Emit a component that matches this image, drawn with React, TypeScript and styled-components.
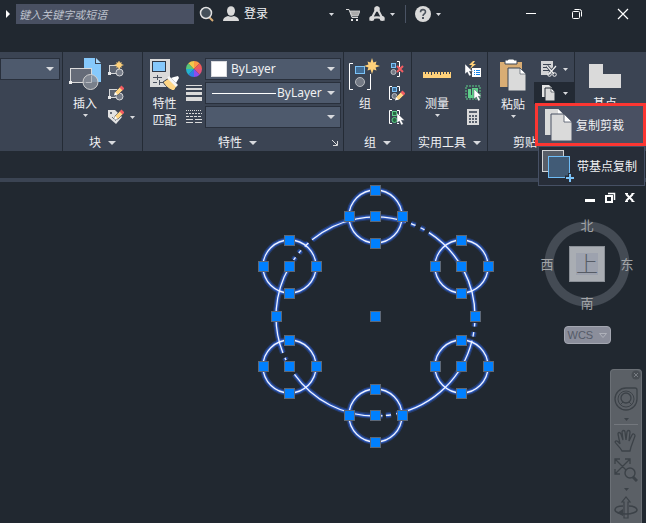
import React from "react";
import styled, { createGlobalStyle } from "styled-components";

const GlobalStyle = createGlobalStyle`
  *, *::before, *::after { box-sizing: border-box; }
  body {
    margin: 0;
    background: #212830;
    color: #f0f1f3;
    font-family: "Noto Sans", "Noto Sans CJK SC", sans-serif;
    font-size: 12px;
    line-height: 16px;
    overflow: hidden;
  }
  button, input, select {
    font: inherit;
    color: inherit;
    margin: 0;
    padding: 0;
    border: 0;
    background: none;
  }
  svg { display: block; flex: none; }
`;

const App = styled.div`
  display: flex;
  flex-direction: column;
  min-height: 100vh;
`;

/* ---------- title bar ---------- */

const TitleBar = styled.header`
  display: flex;
  align-items: center;
  height: 28px;
  margin-bottom: 24px;
  padding-left: 4px;
`;

const SearchBox = styled.input`
  width: 178px;
  height: 20px;
  margin-left: 4px;
  padding: 0 3px;
  background: #495062;
  font-size: 11px;
  font-style: italic;
  &::placeholder { color: #bcc1cc; opacity: 1; }
`;

const IconButton = styled.button<{ $gap?: number }>`
  display: flex;
  align-items: center;
  gap: 5px;
  margin-left: ${(p) => p.$gap ?? 0}px;
`;

const TitleGap = styled.div<{ $width: number }>`
  width: ${(p) => p.$width}px;
`;

const Divider = styled.div`
  width: 1px;
  height: 18px;
  margin: 0 9px 0 10px;
  background: #4a5364;
`;

const WindowButtons = styled.div`
  display: flex;
  gap: 34px;
  margin-left: auto;
  padding-right: 17px;
`;

/* ---------- ribbon ---------- */

const Ribbon = styled.nav`
  display: flex;
  height: 99px;
  background: #3b4453;
`;

const Panel = styled.section<{ $width?: number }>`
  display: flex;
  flex-direction: column;
  flex: ${(p) => (p.$width ? `0 0 ${p.$width}px` : "1")};
  min-width: 0;
  border-right: 1px solid #242b35;
  &:last-child { border-right: 0; }
`;

const PanelBody = styled.div<{ $left?: number; $gap?: number }>`
  display: flex;
  height: 82px;
  gap: ${(p) => p.$gap ?? 4}px;
  padding: 6px 2px 0 ${(p) => p.$left ?? 4}px;
`;

const PanelTitle = styled.div`
  display: flex;
  align-items: center;
  justify-content: center;
  gap: 7px;
  height: 17px;
  white-space: nowrap;
`;

const PanelFooter = styled.div`
  display: grid;
  grid-template-columns: 1fr auto;
  align-items: center;
  padding-right: 5px;
`;

const BigButton = styled.button<{ $width: number }>`
  display: flex;
  flex-direction: column;
  align-items: center;
  flex: 0 0 ${(p) => p.$width}px;
  height: 74px;
  & > svg:last-child:not(:first-child) { margin-top: 2px; }
`;

const BigLabel = styled.span`
  margin-top: 5px;
  line-height: 17px;
  white-space: pre-line;
`;

const Stack = styled.div`
  display: flex;
  flex-direction: column;
  gap: 8px;
  padding-top: 3px;
`;

const SmallButton = styled.button<{ $active?: boolean }>`
  display: flex;
  align-items: center;
  gap: 6px;
  height: 16px;
  ${(p) => p.$active && "background: #232a34; box-shadow: -4px 0 0 3px #232a34, 4px 0 0 3px #232a34;"}
`;

const Fields = styled.div`
  display: flex;
  flex-direction: column;
  flex: 1;
  gap: 2px;
`;

const Field = styled.label`
  display: flex;
  align-items: center;
  height: 22px;
  padding: 0 5px;
  gap: 4px;
  background: #4e5a6d;
  border: 1px solid #29303c;
`;

const Select = styled.select`
  flex: 1;
  width: 0;
  min-width: 0;
  appearance: none;
  outline: 0;
  overflow: hidden;
  text-overflow: clip;
`;

const Swatch = styled.span`
  width: 16px;
  height: 16px;
  background: #fff;
  border: 1px solid #d9dadd;
`;

const LinePreview = styled.span`
  width: 64px;
  height: 1px;
  background: #fff;
  margin: 0 -3px 0 1px;
`;

/* ---------- drop-down menu ---------- */

const Anchor = styled.div`
  position: relative;
  z-index: 2;
`;

const Menu = styled.div`
  position: absolute;
  top: -48px;
  right: 0;
  width: 111px;
`;

const MenuItem = styled.button<{ $marked?: boolean }>`
  display: flex;
  align-items: center;
  gap: 2px;
  width: ${(p) => (p.$marked ? "100%" : "107px")};
  height: ${(p) => (p.$marked ? 43 : 40)}px;
  margin-left: ${(p) => (p.$marked ? 0 : 3)}px;
  padding-left: ${(p) => (p.$marked ? 5 : 2)}px;
  background: ${(p) => (p.$marked ? "#495062" : "#272d38")};
  border: ${(p) => (p.$marked ? "3px solid #fc3632" : "1px solid #465064")};
  white-space: nowrap;
  & > span { padding-top: 2px; }
`;

/* ---------- drawing area ---------- */

const TabStrip = styled.div`
  height: 31px;
  border-bottom: 4px solid #3b4453;
  background: #232a33;
`;

const Canvas = styled.main`
  position: relative;
  flex: 1;
  overflow: hidden;
  padding-left: 250px;
`;

const ViewControls = styled.div`
  position: absolute;
  top: 10px;
  right: 10px;
  display: flex;
  gap: 8px;
`;

const ViewCube = styled.div`
  position: absolute;
  top: 34px;
  right: 11px;
  width: 96px;
  display: flex;
  flex-direction: column;
  align-items: center;
`;

const Compass = styled.div`
  display: grid;
  grid-template: 18px 60px 18px / 16px 64px 16px;
  place-items: center;
  width: 96px;
  height: 96px;
  background: radial-gradient(circle, transparent 33px, #444b54 34px, #444b54 42px, transparent 43px);
`;

const Direction = styled.button<{ $area: string }>`
  grid-area: ${(p) => p.$area};
  font-size: 13px;
  color: #a2a4a7;
`;

const Face = styled.button`
  grid-area: 2 / 2;
  display: grid;
  place-items: center;
  width: 36px;
  height: 36px;
  background: #a9adb3;
  border: 1px solid #8a8f96;
  & > span {
    width: 22px;
    height: 22px;
    background: #9da2ae;
    font-size: 22px;
    line-height: 20px;
    font-weight: 300;
    color: #565c66;
  }
`;

const WcsButton = styled.button`
  display: flex;
  align-items: center;
  gap: 6px;
  width: 47px;
  height: 18px;
  margin-top: 14px;
  padding-left: 3px;
  border: 1px solid #a4a7b1;
  border-radius: 4px;
  background: #8b8e9b;
  color: #555b68;
  font-family: "Liberation Sans", sans-serif;
  font-size: 11px;
`;

const NavBar = styled.div`
  position: absolute;
  top: 187px;
  right: 4px;
  bottom: 0;
  width: 32px;
  display: flex;
  flex-direction: column;
  align-items: center;
  background: #5b6066;
  border: 1px solid #6b7076;
  border-bottom: 0;
  border-radius: 4px 4px 0 0;
`;

const NavButton = styled.button<{ $top?: number; $end?: boolean }>`
  margin-top: ${(p) => p.$top ?? 0}px;
  align-self: ${(p) => (p.$end ? "flex-end" : "center")};
`;

const NavRule = styled.hr`
  width: 24px;
  margin: 3px 0 0;
  border: 0;
  border-top: 1px solid #73777d;
`;

/* ---------- icons ---------- */

type IconProps = { w?: number; h?: number; children: React.ReactNode };

const Icon = ({ w = 16, h = w, children }: IconProps) => (
  <svg width={w} height={h} viewBox={`0 0 ${w} ${h}`} fill="none" aria-hidden="true">
    {children}
  </svg>
);

const Caret = ({ small }: { small?: boolean }) =>
  small ? (
    <Icon w={5} h={3}><path d="M0 0h5L2.5 3z" fill="#d8dade" /></Icon>
  ) : (
    <Icon w={8} h={4}><path d="M0 0h8L4 4z" fill="#d8dade" /></Icon>
  );

const Star = ({ x, y, r }: { x: number; y: number; r: number }) => {
  const pts = Array.from({ length: 16 }, (_, i) => {
    const rad = i % 2 ? r * 0.48 : i % 4 ? r * 0.8 : r;
    const a = (i * Math.PI) / 8;
    return `${x + rad * Math.cos(a)},${y + rad * Math.sin(a)}`;
  });
  return <polygon points={pts.join(" ")} fill="#ffd17a" />;
};

const Pencil = ({ x, y }: { x: number; y: number }) => (
  <g transform={`translate(${x} ${y})`}>
    <path d="M0 9l1-3 5-5 3 3-5 5z" fill="#ffd685" stroke="#3b4453" strokeWidth=".6" />
    <path d="M0 9.500l1-3.500 2.500 2.500z" fill="#fff" />
    <path d="M5.500 1.500L7.500-.5l3 3-2 2z" fill="#f25d62" />
  </g>
);

const Cursor = ({ x, y }: { x: number; y: number }) => (
  <path transform={`translate(${x} ${y})`} d="M0 0v10l2.300-2 2 4 2-1-2-3.700H7.500z" fill="#fff" stroke="#3b4453" strokeWidth=".4" />
);

const BlockBase = () => (
  <>
    <rect x="1.500" y="4.500" width="10" height="8" fill="#5c6472" stroke="#d5d6d8" />
    <circle cx="11.500" cy="11.500" r="3.500" fill="#767c88" stroke="#d5d6d8" />
    <path d="M0 11h3v3H0z" fill="#e8e8e8" />
  </>
);

const InsertIcon = () => (
  <Icon w={32}>
    <path d="M15 0h11v6h6v18H15z" fill="#86c9fc" />
    <path d="M27 0l5 5h-5z" fill="#a9dafd" />
    <rect x="1.500" y="10.500" width="21" height="14" fill="#656b78" stroke="#dadada" />
    <path d="M0 23h3v3H0z" fill="#eee" />
    <circle cx="21.500" cy="24" r="7.500" fill="#858b95" fillOpacity=".85" stroke="#d0d0d0" />
    <path d="M17 24.500h5.500V18" stroke="#b9bcc2" />
  </Icon>
);

const MatchIcon = () => (
  <Icon w={32} h={32}>
    <path d="M1 1h20v28H1z" fill="#dadada" />
    <rect x="3.500" y="3.500" width="13" height="10" fill="#86c9fc" stroke="#303947" />
    <path d="M4 19.500h9M8.500 17v5M4 24.500h4M10 24.500h4M10.500 22v5" stroke="#4b5361" />
    <path d="M14 24l6-4 8 8-3 5c-4-1-8-4-11-9z" fill="#ffd685" stroke="#3b4453" />
    <path d="M18 20l2-2 9 9-2 2z" fill="#f5f5f5" />
    <path d="M22 20l3-1 4-1 1 2-3 5z" fill="#fff" />
  </Icon>
);

const ColorWheel = () => {
  const colors = ["#ff9a45", "#ef5b5b", "#e2557b", "#8a4df0", "#2f7fe6", "#23b3cf", "#57c77a", "#f2c94c"];
  const at = (i: number) => {
    const a = ((i * 45 - 90) * Math.PI) / 180;
    return `${8 + 8 * Math.cos(a)} ${8 + 8 * Math.sin(a)}`;
  };
  return (
    <Icon>
      {colors.map((c, i) => <path key={c} d={`M8 8L${at(i)}A8 8 0 0 1 ${at(i + 1)}z`} fill={c} />)}
    </Icon>
  );
};

const GroupIcon = () => (
  <Icon w={32}>
    <path d="M4 5.500H.5v26H4M18 31.500h3.500V16" stroke="#fff" />
    <rect x="6.500" y="8.500" width="9" height="7" fill="#416d96" stroke="#7cc3f8" />
    <circle cx="11" cy="24" r="4.500" fill="#747a85" stroke="#b8bbc0" />
    <Star x={23} y={8} r={8} />
  </Icon>
);

const GroupSmall = ({ left, green, children }: { left?: boolean; green?: boolean; children: React.ReactNode }) => (
  <Icon>
    <path d={left ? "M3 1.500H.5v13H3M8 1.500h2.500V6M8 14.500h2" : "M8 .5h2.500V6M8 15.500h2.500V11"} stroke="#fff" />
    <rect x={left ? 3.5 : 2.5} y="2.500" width="4" height="4" fill={green ? "#286843" : "#416d96"} stroke={green ? "#5fd08a" : "#7cc3f8"} />
    <circle cx={left ? 5.5 : 4.5} cy="11" r="2.500" fill={green ? "#286843" : "#747a85"} stroke={green ? "#5fd08a" : "#b8bbc0"} />
    {children}
  </Icon>
);

const RulerIcon = () => (
  <Icon w={28} h={32}>
    <path d="M0 14h28v6H0z" fill="#ffd17a" />
    <path d="M2.500 14v2M5.500 14v2M8.500 14v3M11.500 14v2M14.500 14v2M17.500 14v3M20.500 14v2M23.500 14v2M26.500 14v2" stroke="#3b4453" />
  </Icon>
);

const PasteIcon = () => (
  <Icon w={28} h={33}>
    <path d="M1 4h22v25H1z" fill="#d9ad74" />
    <path d="M6 6V2h3V1h6v1h3v4z" fill="#fff" stroke="#3b4453" />
    <path d="M9 10h12l6 6v17H9z" fill="#dadada" stroke="#3b4453" />
    <path d="M21 10v6h6z" fill="#fff" stroke="#3b4453" strokeWidth=".6" />
  </Icon>
);

const PagesIcon = ({ big }: { big?: boolean }) =>
  big ? (
    <Icon w={31} h={34}>
      <path d="M2 1h13l6 6v20H2z" fill="#dadada" />
      <path d="M15 1v6h6z" fill="#fff" />
      <path d="M8 6h14l7 7v20H8z" fill="#dadada" stroke="#495062" />
      <path d="M21 6v8h8z" fill="#fff" stroke="#495062" strokeWidth=".8" />
    </Icon>
  ) : (
    <Icon>
      <path d="M1 0h7l3 3v9H1z" fill="#e3e3e3" />
      <path d="M4 3h6l4 4v9H4z" fill="#dadada" stroke="#232a34" />
      <path d="M10 3v4h4z" fill="#fff" stroke="#232a34" strokeWidth=".6" />
    </Icon>
  );

const BaseCopyIcon = () => (
  <Icon w={34} h={34}>
    <rect x="1.500" y="1.500" width="21" height="21" fill="#585e68" stroke="#d2d3d5" />
    <rect x="7.500" y="7.500" width="21" height="21" fill="#415b76" stroke="#6ebcf6" />
    <path d="M29 24v9M24 28.500h9" stroke="#272d38" strokeWidth="4" />
    <path d="M29 25v8M25 29h8" stroke="#7cc3f8" strokeWidth="2" />
  </Icon>
);

/* ---------- drawing ---------- */

const CENTER = { x: 375.5, y: 316.5, r: 99.5 };
const ARCS = [
  [230.4, 287.8], [290.9, 293.7], [296.9, 299.5], [302.5, 362], [3.7, 5.8], [9, 11.6], [14, 78],
  [81, 84], [86, 87.5], [90, 144.5], [154, 155.5], [158.5, 210], [214.6, 216.5], [219.6, 221.6], [224.7, 227.6],
];
const CIRCLES = [[375.5, 216.5], [289.5, 266.5], [461.5, 266.5], [289.5, 366.5], [461.5, 366.5], [375.5, 415.5]];

const arcPath = ([from, to]: number[]) => {
  const at = (deg: number) => {
    const a = (deg * Math.PI) / 180;
    return `${CENTER.x + CENTER.r * Math.cos(a)} ${CENTER.y + CENTER.r * Math.sin(a)}`;
  };
  return `M${at(from)}A${CENTER.r} ${CENTER.r} 0 0 1 ${at(to)}`;
};

const Curves = () => (
  <>
    <path d={ARCS.map(arcPath).join("")} />
    {CIRCLES.map(([x, y]) => <circle key={`${x}-${y}`} cx={x} cy={y} r="26.500" />)}
  </>
);

const Drawing = () => {
  const grips = [CENTER, { x: 276.5, y: 316.5 }, { x: 475.5, y: 316.5 }].map(({ x, y }) => [x, y]);
  CIRCLES.forEach(([x, y]) => {
    grips.push([x, y], [x - 26, y], [x + 27, y], [x, y - 26], [x, y + 27]);
  });
  return (
    <svg width="250" height="270" viewBox="250 182 250 270" fill="none" role="img" aria-label="图形">
      <g stroke="#2a5fd6" strokeWidth="6" strokeOpacity=".35"><Curves /></g>
      <g stroke="#2f62dc" strokeWidth="3.500" strokeOpacity=".7"><Curves /></g>
      <g stroke="#eef3ff" strokeWidth="1.300"><Curves /></g>
      {grips.map(([x, y]) => (
        <rect key={`${x}-${y}`} x={x - 5} y={y - 5} width="10" height="10" fill="#0080ff" stroke="#5d6878" />
      ))}
    </svg>
  );
};

const LINE = "#3c4248";

export default function CadWindow() {
  return (
    <App>
      <GlobalStyle />
      <TitleBar>
        <IconButton aria-label="展开">
          <Icon w={8} h={12}><path d="M2 2l4 4-4 4z" fill="#fff" /></Icon>
        </IconButton>
        <SearchBox aria-label="搜索" placeholder="键入关键字或短语" />
        <IconButton $gap={5} aria-label="查找">
          <Icon>
            <path d="M10 11l4 4" stroke="#d9ad74" strokeWidth="2" />
            <circle cx="7" cy="7" r="5.500" fill="#45505a" stroke="#e2e2e2" strokeWidth="1.500" />
          </Icon>
        </IconButton>
        <IconButton $gap={8}>
          <Icon>
            <ellipse cx="8" cy="5" rx="4" ry="4.800" fill="#dadada" />
            <path d="M0 15c0-3 2-4 5-5 2 1 4 1 6 0 3 1 5 2 5 5z" fill="#dadada" />
          </Icon>
          <span>登录</span>
        </IconButton>
        <TitleGap $width={61} />
        <IconButton aria-label="登录选项"><Caret small /></IconButton>
        <IconButton $gap={12} aria-label="商店">
          <Icon w={14}>
            <path d="M0 2.500h3l3 8h6" stroke="#d8d8d8" />
            <path d="M4 4h10l-2 5H6z" fill="#aaa" stroke="#d8d8d8" strokeWidth=".8" />
            <path d="M5 12h2v2H5zM10 12h2v2h-2z" fill="#e8e8e8" />
          </Icon>
        </IconButton>
        <IconButton $gap={9} aria-label="Autodesk App">
          <Icon>
            <path d="M8 2L2.500 12.500C6 11 10 11 13.500 12.500z" stroke="#dadada" strokeWidth="2.200" />
            <circle cx="8" cy="3" r="2.800" fill="#dadada" />
            <circle cx="2.800" cy="12.500" r="2.500" fill="#dadada" />
            <circle cx="13.200" cy="12.500" r="2.500" fill="#dadada" />
          </Icon>
          <Caret small />
        </IconButton>
        <Divider />
        <IconButton aria-label="帮助">
          <Icon>
            <circle cx="8" cy="8" r="8" fill="#dadada" />
            <path d="M5.500 6.200C5.500 2.700 10.500 2.800 10.500 6 10.500 8 8 7.800 8 10" stroke="#4c535d" strokeWidth="1.600" />
            <path d="M7 11h2v2H7z" fill="#4c535d" />
          </Icon>
          <Caret small />
        </IconButton>
        <WindowButtons>
          <IconButton aria-label="最小化"><Icon w={12}><path d="M1 5.500h10" stroke="#fff" /></Icon></IconButton>
          <IconButton aria-label="还原">
            <Icon w={12}>
              <rect x="1.500" y="3.500" width="7" height="7" rx="1" stroke="#fff" />
              <path d="M3.500 1.500h5a2 2 0 0 1 2 2v5" stroke="#fff" />
            </Icon>
          </IconButton>
          <IconButton aria-label="关闭"><Icon w={12}><path d="M1 1l10 10M11 1L1 11" stroke="#fff" strokeWidth="1.200" /></Icon></IconButton>
        </WindowButtons>
      </TitleBar>

      <Ribbon>
        <Panel $width={63}>
          <PanelBody $left={0}>
            <Fields>
              <Field>
                <Select aria-label="样式" />
                <Caret />
              </Field>
            </Fields>
          </PanelBody>
        </Panel>

        <Panel $width={80}>
          <PanelBody $left={4} $gap={5}>
            <BigButton $width={36}>
              <InsertIcon />
              <BigLabel>插入</BigLabel>
              <Caret small />
            </BigButton>
            <Stack>
              <SmallButton aria-label="创建块"><Icon><BlockBase /><Star x={11} y={4} r={5} /></Icon></SmallButton>
              <SmallButton aria-label="编辑块"><Icon><BlockBase /><Pencil x={6} y={1} /></Icon></SmallButton>
              <SmallButton aria-label="编辑属性">
                <Icon>
                  <path d="M0 1h7l7 7-6 7-8-7z" fill="#e2e2e2" />
                  <circle cx="3" cy="4" r="1" fill="#3b4453" />
                  <path d="M4 8l4 4" stroke="#3b4453" strokeDasharray="1 1" />
                  <Pencil x={6} y={1} />
                </Icon>
                <Caret small />
              </SmallButton>
            </Stack>
          </PanelBody>
          <PanelTitle>块<Caret /></PanelTitle>
        </Panel>

        <Panel $width={201}>
          <PanelBody $left={3} $gap={3}>
            <BigButton $width={37}>
              <MatchIcon />
              <BigLabel>{"特性\n匹配"}</BigLabel>
            </BigButton>
            <Stack>
              <SmallButton aria-label="颜色"><ColorWheel /></SmallButton>
              <SmallButton aria-label="线宽"><Icon><path d="M0 0h16v1H0zM0 3h16v2H0zM0 7h16v3H0zM0 12h16v4H0z" fill="#dadada" /></Icon></SmallButton>
              <SmallButton aria-label="线型">
                <Icon>
                  <path d="M0 1.500h16" stroke="#dadada" strokeDasharray="1 1" />
                  <path d="M0 4.500h16" stroke="#dadada" strokeDasharray="2 1" />
                  <path d="M0 7.500h16" stroke="#dadada" strokeDasharray="3 1" />
                  <path d="M0 10.500h16M0 13.500h16" stroke="#dadada" strokeDasharray="7 2" />
                </Icon>
              </SmallButton>
            </Stack>
            <Fields>
              <Field>
                <Swatch />
                <Select aria-label="对象颜色"><option>ByLayer</option></Select>
                <Caret />
              </Field>
              <Field>
                <LinePreview />
                <Select aria-label="对象线宽"><option>ByLayer</option></Select>
                <Caret />
              </Field>
              <Field>
                <Select aria-label="对象线型" />
                <Caret />
              </Field>
            </Fields>
          </PanelBody>
          <PanelFooter>
            <PanelTitle>特性<Caret /></PanelTitle>
            <IconButton aria-label="特性设置"><Icon w={6}><path d="M0 0l5 5M5.500 1v4.500H1" stroke="#dadada" /></Icon></IconButton>
          </PanelFooter>
        </Panel>

        <Panel $width={68}>
          <PanelBody $left={4} $gap={7}>
            <BigButton $width={34}>
              <GroupIcon />
              <BigLabel>组</BigLabel>
            </BigButton>
            <Stack>
              <SmallButton aria-label="解除编组"><GroupSmall><path d="M8 5l6 6M14 5l-6 6" stroke="#f25d62" strokeWidth="2" /></GroupSmall></SmallButton>
              <SmallButton aria-label="组编辑"><GroupSmall left><Pencil x={6} y={6} /></GroupSmall></SmallButton>
              <SmallButton aria-label="组选择"><GroupSmall left green><Cursor x={8} y={4} /></GroupSmall></SmallButton>
            </Stack>
          </PanelBody>
          <PanelTitle>组<Caret /></PanelTitle>
        </Panel>

        <Panel $width={76}>
          <PanelBody $left={7} $gap={10}>
            <BigButton $width={36}>
              <RulerIcon />
              <BigLabel>测量</BigLabel>
              <Caret small />
            </BigButton>
            <Stack>
              <SmallButton aria-label="快速选择">
                <Icon>
                  <path d="M8 0L4 4h3L5 8l6-5H8l2-3z" fill="#ffd17a" />
                  <rect x="7" y="7" width="9" height="9" fill="#fff" />
                  <path d="M9 9.500h1M9 11.500h1M9 13.500h1M11 9.500h4M11 11.500h4M11 13.500h4" stroke="#1684e8" />
                  <Cursor x={0} y={3} />
                </Icon>
              </SmallButton>
              <SmallButton aria-label="全部选择">
                <Icon>
                  <rect x="1" y="1" width="14" height="13" stroke="#5fd08a" strokeDasharray="2 1" />
                  <path d="M3 4h3v6h5v3H3z" fill="#5fd08a" />
                  <path d="M7 3h6v7H7z" fill="#5fd08a" />
                  <Cursor x={9} y={4} />
                </Icon>
              </SmallButton>
              <SmallButton aria-label="计算器">
                <Icon>
                  <path d="M2 0h12v16H2z" fill="#dadada" />
                  <path d="M4 2h8v2H4zM4 6h2v2H4zM7 6h2v2H7zM10 6h2v2h-2zM4 9h2v2H4zM7 9h2v2H7zM10 9h2v2h-2zM4 12h2v2H4zM7 12h2v2H7zM10 12h2v2h-2z" fill="#59616e" />
                </Icon>
              </SmallButton>
            </Stack>
          </PanelBody>
          <PanelTitle>实用工具<Caret /></PanelTitle>
        </Panel>

        <Panel $width={87}>
          <PanelBody $left={7} $gap={10}>
            <BigButton $width={36}>
              <PasteIcon />
              <BigLabel>粘贴</BigLabel>
              <Caret small />
            </BigButton>
            <Stack>
              <SmallButton aria-label="剪切">
                <Icon>
                  <path d="M0 0h12v7l-3 7H0z" fill="#d2d3d5" />
                  <path d="M2 3.500h8M2 6.500h6M2 9.500h6" stroke="#3b4453" />
                  <path d="M6 5l7 8M15 5l-7 8" stroke="#3b4453" strokeWidth="3" />
                  <path d="M6 5l7 8M15 5l-7 8" stroke="#f0f0f0" strokeWidth="1.200" />
                  <circle cx="8.500" cy="13.500" r="1.800" stroke="#f0f0f0" />
                  <circle cx="13.500" cy="13.500" r="1.800" stroke="#f0f0f0" />
                </Icon>
                <Caret small />
              </SmallButton>
              <SmallButton aria-label="复制" $active><PagesIcon /><Caret small /></SmallButton>
            </Stack>
          </PanelBody>
          <PanelTitle>剪贴板</PanelTitle>
        </Panel>

        <Panel>
          <PanelBody $left={12}>
            <BigButton $width={36}>
              <Icon w={32}><path d="M0 6h14v10h18v14H0z" fill="#dadada" /></Icon>
              <BigLabel>基点</BigLabel>
            </BigButton>
          </PanelBody>
        </Panel>
      </Ribbon>

      <Anchor>
        <Menu role="menu">
          <MenuItem role="menuitem" $marked><PagesIcon big /><span>复制剪裁</span></MenuItem>
          <MenuItem role="menuitem"><BaseCopyIcon /><span>带基点复制</span></MenuItem>
        </Menu>
      </Anchor>

      <TabStrip />

      <Canvas>
        <Drawing />
        <ViewControls>
          <IconButton aria-label="最小化视口"><Icon w={12}><path d="M1 7h10v3H1z" fill="#fff" /></Icon></IconButton>
          <IconButton aria-label="还原视口">
            <Icon w={12}>
              <path d="M4 1.500h6.500V8" stroke="#fff" strokeWidth="1.500" />
              <rect x="2" y="4" width="6" height="6" stroke="#fff" strokeWidth="2" />
            </Icon>
          </IconButton>
          <IconButton aria-label="关闭视口"><Icon w={12}><path d="M2 2l7 7M9 2L2 9" stroke="#fff" strokeWidth="2" /><path d="M1 1.500h3M7.500 1.500h3M1 9.500h3M7.500 9.500h3" stroke="#fff" /></Icon></IconButton>
        </ViewControls>
        <ViewCube>
          <Compass>
            <Direction $area="1 / 2 / 2 / 3">北</Direction>
            <Direction $area="2 / 1 / 3 / 2">西</Direction>
            <Face><span>上</span></Face>
            <Direction $area="2 / 3 / 3 / 4">东</Direction>
            <Direction $area="3 / 2 / 4 / 3">南</Direction>
          </Compass>
          <WcsButton>WCS<Icon w={8} h={5}><path d="M.5.5h7L4 4.500z" stroke="#aeb1ba" /></Icon></WcsButton>
        </ViewCube>
        <NavBar>
          <NavButton $end aria-label="关闭导航栏">
            <Icon w={10}><circle cx="5" cy="5" r="4.500" fill="#484d53" /><path d="M3 3l4 4M7 3L3 7" stroke="#777c82" /></Icon>
          </NavButton>
          <NavButton $top={7} aria-label="导航控制盘">
            <Icon w={24}>
              <path d="M12 1h9q2 0 2 2v9A11 11 0 1 1 12 1z" stroke={LINE} strokeWidth="1.300" />
              <circle cx="12" cy="12" r="8" stroke={LINE} />
              <circle cx="12" cy="11" r="5" stroke={LINE} strokeWidth="1.300" />
              <path d="M6 18l3-3M18 18l-3-3" stroke={LINE} />
            </Icon>
          </NavButton>
          <NavButton $top={7} aria-label="控制盘选项"><Icon w={5} h={3}><path d="M0 0h5L2.500 3z" fill={LINE} /></Icon></NavButton>
          <NavRule />
          <NavButton $top={4} aria-label="平移">
            <Icon w={24}>
              <path d="M8 22C6 18 3 16 1 13c1-2 3-1 5 2L4 5c0-2 2-2 3 0l2 6-1-8c0-2 3-2 3 0l1 8 1-8c0-2 3-2 3 0l-1 9 3-6c1-2 3-1 3 1l-4 11-1 4z" stroke={LINE} strokeWidth="1.300" />
            </Icon>
          </NavButton>
          <NavButton $top={5} aria-label="范围缩放">
            <Icon w={24}>
              <path d="M1 1l15 15M16 1L1 16M1 6V1h5M11 1h5v5M1 11v5h5" stroke={LINE} strokeWidth="1.300" />
              <circle cx="16" cy="15" r="5" fill="#5b6066" stroke={LINE} strokeWidth="1.400" />
              <path d="M19 19l4 4" stroke={LINE} strokeWidth="3" />
            </Icon>
          </NavButton>
          <NavButton $top={6} aria-label="缩放选项"><Icon w={5} h={3}><path d="M0 0h5L2.500 3z" fill={LINE} /></Icon></NavButton>
          <NavButton $top={5} aria-label="动态观察">
            <Icon w={24}>
              <path d="M10 22V6H8l4-5 4 5h-2v16z" stroke={LINE} strokeWidth="1.200" />
              <path d="M9 10C3 10 1 12 1 14s5 4 11 4 11-2 11-4-3-4-8-4" stroke={LINE} strokeWidth="1.500" />
              <path d="M3 17l6-4v7z" fill={LINE} />
            </Icon>
          </NavButton>
        </NavBar>
      </Canvas>
    </App>
  );
}
